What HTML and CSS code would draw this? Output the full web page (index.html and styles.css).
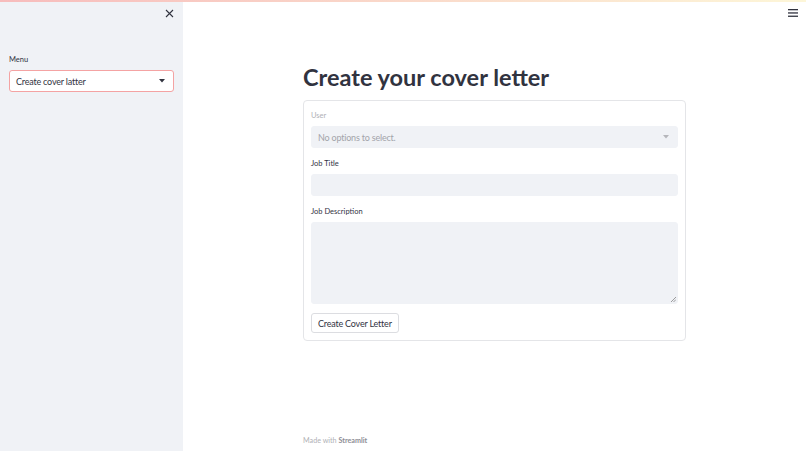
FILE: index.html
```html
<!DOCTYPE html>
<html lang="en">
<head>
<meta charset="UTF-8" />
<meta name="viewport" content="width=device-width, initial-scale=1.0" />
<title>Cover letter</title>
<link rel="stylesheet" href="styles.css">
</head>
<body>
<div class="decoration"></div>
<button class="menuBtn" aria-label="menu">
<svg width="10" height="8" viewBox="0 0 10 8"><rect y="0" width="10" height="1.3" fill="#31333f"/><rect y="3.3" width="10" height="1.3" fill="#31333f"/><rect y="6.6" width="10" height="1.3" fill="#31333f"/></svg>
</button>

<div class="app">
<aside class="sidebar">
<div class="sideTop">
<svg class="close" width="9" height="9" viewBox="0 0 9 9"><path d="M1 1 L8 8 M8 1 L1 8" stroke="#31333f" stroke-width="1.1"/></svg>
</div>
<label class="label">Menu</label>
<div class="select active">
<span>Create cover latter</span>
<svg width="6" height="4" viewBox="0 0 6 4"><path d="M0 0 L6 0 L3 3.5 Z" fill="#31333f"/></svg>
</div>
</aside>

<main class="main">
<div class="block">
<h1>Create your cover letter</h1>
<form class="form">
<label class="label disabled">User</label>
<div class="select field muted">
<span>No options to select.</span>
<svg width="6" height="4" viewBox="0 0 6 4"><path d="M0 0 L6 0 L3 3.5 Z" fill="#b5b6bb"/></svg>
</div>
<label class="label">Job Title</label>
<div class="field input"></div>
<label class="label">Job Description</label>
<div class="field textarea">
<svg class="grip" width="5" height="5" viewBox="0 0 5 5"><path d="M5 0 L0 5 M5 2.5 L2.5 5" stroke="#777" stroke-width="0.7"/></svg>
</div>
<button type="button" class="btn">Create Cover Letter</button>
</form>
</div>
<footer class="footer">Made with <b>Streamlit</b></footer>
</main>
</div>
</body>
</html>
```

FILE: styles.css
```css
* {
margin: 0;
padding: 0;
box-sizing: border-box;
}

body {
font-family: 'Lato', sans-serif;
color: #31333f;
background: #fff;
width: 806px;
height: 451px;
overflow: hidden;
}

.decoration {
position: absolute;
top: 0;
left: 0;
right: 0;
height: 2px;
background: linear-gradient(90deg, #f7bcbc, #fdf6d8);
}

.menuBtn {
position: absolute;
top: 9px;
right: 8px;
border: 0;
background: none;
line-height: 0;
}

.app {
display: flex;
height: 451px;
}

.sidebar {
width: 183px;
background: #f0f2f6;
padding: 0 9px;
}

.sideTop {
display: flex;
justify-content: flex-end;
padding: 9px 0 0 0;
height: 54px;
}

.label {
display: block;
font-size: 7.5px;
color: #31333f;
height: 11px;
line-height: 11px;
margin-bottom: 5px;
}

.label.disabled {
color: #b0b1b6;
}

.select {
display: flex;
align-items: center;
justify-content: space-between;
height: 22px;
padding: 0 8px 0 6px;
font-size: 9px;
letter-spacing: -0.2px;
background: #fff;
border-radius: 3px;
border: 1px solid #f0f2f6;
}

.select.active {
border-color: #f4a3a3;
}

.main {
flex: 1;
display: flex;
flex-direction: column;
align-items: center;
}

.block {
width: 383px;
padding-top: 60px;
}

h1 {
font-size: 23.5px;
font-weight: 700;
line-height: 34px;
margin-bottom: 6px;
}

.form {
border: 1px solid #e4e5e8;
border-radius: 4px;
padding: 9px 7px 7px 7px;
}

.field {
background: #f0f2f6;
border-radius: 3px;
height: 22px;
margin-bottom: 10px;
border: 1px solid #f0f2f6;
}

.muted {
color: #a3a4aa;
}

.textarea {
height: 82px;
position: relative;
margin-bottom: 9px;
}

.grip {
position: absolute;
right: 1px;
bottom: 1px;
}

.btn {
display: block;
font-family: inherit;
font-size: 9px;
letter-spacing: -0.2px;
color: #31333f;
background: #fff;
border: 1px solid #dcdde1;
border-radius: 3px;
height: 20px;
padding: 0 6px;
}

.footer {
margin-top: auto;
width: 383px;
font-size: 7.2px;
color: #b0b1b6;
padding-bottom: 6px;
}

.footer b {
font-weight: 700;
color: #8d8e95;
}
```
